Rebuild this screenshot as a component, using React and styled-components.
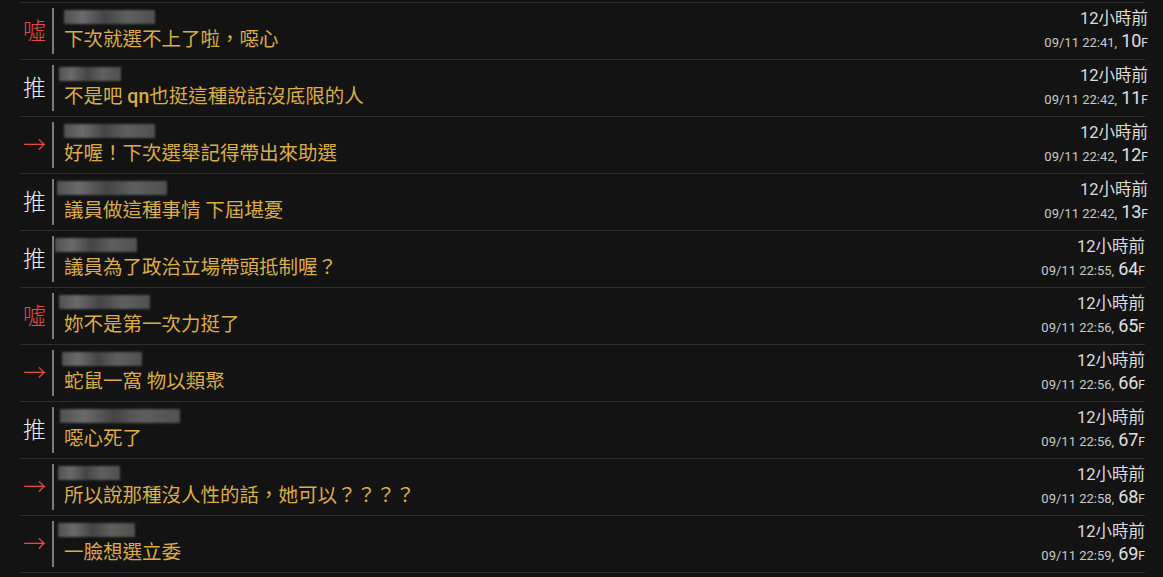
import React from "react";
import styled, { createGlobalStyle } from "styled-components";

const GlobalStyle = createGlobalStyle`
  html, body {
    margin: 0;
    padding: 0;
    background: #131313;
  }
  body {
    font-family: Roboto, "Noto Sans CJK TC", sans-serif;
  }
`;

const List = styled.div`
  margin: 2px 0 0 20px;
  width: 1125px;
  border-top: 1px solid #2e2e2e;
`;

const Row = styled.div`
  display: grid;
  grid-template-columns: 32px 2px 1fr auto;
  align-items: center;
  height: 56px;
  border-bottom: 1px solid #2e2e2e;
`;

const Tag = styled.div`
  font-family: "Noto Sans CJK TC", sans-serif;
  font-size: 23px;
  font-weight: 300;
  line-height: 1;
  text-align: center;
  color: ${(p) => (p.$kind === "推" ? "#ececec" : "#e04a4a")};
  margin: -4px 0 0 -3px;
`;

const Bar = styled.div`
  width: 2px;
  height: 46px;
  background: #7a7a7a;
`;

const Body = styled.div`
  display: flex;
  flex-direction: column;
  padding-left: 10px;
  min-width: 0;
`;

const User = styled.div`
  height: 14px;
  width: ${(p) => p.$w}px;
  margin-left: ${(p) => p.$x}px;
  margin-top: 1px;
  background: linear-gradient(
    90deg,
    #5c5c5c 0%,
    #7a7a7a 20%,
    #4e4e4e 45%,
    #6d6d6d 70%,
    #5a5a5a 100%
  );
  filter: blur(1.2px);
  opacity: 0.85;
`;

const Text = styled.div`
  font-family: Roboto, "Noto Sans CJK TC", sans-serif;
  font-size: 19.5px;
  line-height: 26px;
  margin-top: 3px;
  color: #dcad45;
  white-space: nowrap;

  b {
    font-weight: 500;
  }
`;

const Meta = styled.div`
  display: flex;
  flex-direction: column;
  align-items: flex-end;
  margin-right: ${(p) => (p.$inset ? 0 : -3)}px;
  color: #dcdcdc;
`;

const Ago = styled.div`
  font-family: Roboto, "Noto Sans CJK TC", sans-serif;
  font-size: 16.5px;
  line-height: 22px;
`;

const Stamp = styled.div`
  font-family: Roboto, sans-serif;
  font-size: 13px;
  line-height: 22px;
  color: #c8c8c8;
  white-space: nowrap;
`;

const Floor = styled.span`
  font-size: 18px;
  color: #e0e0e0;
  margin-left: 4px;
`;

const FloorMark = styled.span`
  font-size: 12px;
  color: #e0e0e0;
`;

const comments = [
  { tag: "噓", user: [0, 91], text: "下次就選不上了啦，噁心", time: "22:41", floor: 10 },
  { tag: "推", user: [-5, 62], text: <>不是吧 <b>qn</b>也挺這種說話沒底限的人</>, time: "22:42", floor: 11 },
  { tag: "→", user: [0, 91], text: "好喔！下次選舉記得帶出來助選", time: "22:42", floor: 12 },
  { tag: "推", user: [-7, 110], text: "議員做這種事情 下屆堪憂", time: "22:42", floor: 13 },
  { tag: "推", user: [-9, 82], text: "議員為了政治立場帶頭抵制喔？", time: "22:55", floor: 64, inset: true },
  { tag: "噓", user: [-5, 91], text: "妳不是第一次力挺了", time: "22:56", floor: 65, inset: true },
  { tag: "→", user: [-2, 80], text: "蛇鼠一窩 物以類聚", time: "22:56", floor: 66, inset: true },
  { tag: "推", user: [-4, 120], text: "噁心死了", time: "22:56", floor: 67, inset: true },
  { tag: "→", user: [-6, 62], text: "所以說那種沒人性的話，她可以？？？？", time: "22:58", floor: 68, inset: true },
  { tag: "→", user: [-6, 77], text: "一臉想選立委", time: "22:59", floor: 69, inset: true },
];

const Comment = ({ c }) => (
  <Row>
    <Tag $kind={c.tag}>{c.tag}</Tag>
    <Bar />
    <Body>
      <User $x={c.user[0]} $w={c.user[1]} />
      <Text>{c.text}</Text>
    </Body>
    <Meta $inset={c.inset}>
      <Ago>12小時前</Ago>
      <Stamp>
        09/11 {c.time},
        <Floor>{c.floor}</Floor>
        <FloorMark>F</FloorMark>
      </Stamp>
    </Meta>
  </Row>
);

export default function App() {
  return (
    <>
      <GlobalStyle />
      <List>
        {comments.map((c) => (
          <Comment key={c.floor} c={c} />
        ))}
      </List>
    </>
  );
}
